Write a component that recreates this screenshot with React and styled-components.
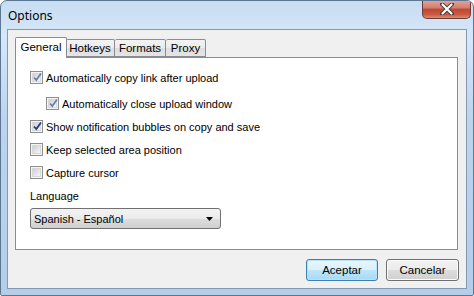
import React from 'react';
import styled, { createGlobalStyle } from 'styled-components';

const Global = createGlobalStyle`
  body {
    margin: 0;
    background: #ffffff;
  }
`;

const Window = styled.div`
  width: 474px;
  height: 296px;
  box-sizing: border-box;
  border: 1px solid #5d7792;
  border-radius: 7px 7px 2px 2px;
  background: linear-gradient(180deg, #c7ddf3 0%, #d6e7f8 12%, #bcd4ee 40%, #b4cde9 100%);
  display: flex;
  flex-direction: column;
  overflow: hidden;
  font-family: Tahoma, "Liberation Sans", sans-serif;
`;

const TitleBar = styled.div`
  height: 28px;
  display: flex;
  align-items: flex-start;
  justify-content: space-between;
  padding: 0 2px 0 7px;
`;

const Title = styled.span`
  font-family: "Noto Sans", "Open Sans", sans-serif;
  font-size: 12px;
  color: #000;
  margin-top: 6px;
`;

const CloseButton = styled.div`
  width: 49px;
  height: 19px;
  margin-top: -1px;
  box-sizing: border-box;
  border: 1px solid #6d3a36;
  border-top: none;
  border-radius: 0 0 5px 5px;
  background: linear-gradient(180deg, #e4a59b 0%, #d27d6f 45%, #bf4734 50%, #c9593f 80%, #dd8e6f 100%);
  display: flex;
  align-items: center;
  justify-content: center;
`;

const Client = styled.div`
  flex: 1;
  margin: 0 6px 6px 6px;
  box-sizing: border-box;
  border: 1px solid #8399b1;
  background: #f0f0f0;
  padding: 7px 7px 0 7px;
  display: flex;
  flex-direction: column;
`;

const TabStrip = styled.div`
  display: flex;
  align-items: flex-end;
  height: 20px;
  position: relative;
  z-index: 1;
`;

const Tab = styled.div`
  box-sizing: border-box;
  width: ${p => p.$w}px;
  height: ${p => (p.$active ? 21 : 18)}px;
  margin-bottom: ${p => (p.$active ? -1 : 0)}px;
  border: 1px solid #898c95;
  border-bottom: ${p => (p.$active ? 'none' : '1px solid #898c95')};
  border-left: ${p => (p.$first || p.$active ? '1px solid #898c95' : 'none')};
  border-radius: 2px 2px 0 0;
  background: ${p => (p.$active ? '#ffffff' : 'linear-gradient(180deg, #f3f3f3 0%, #ebebeb 50%, #dedede 51%, #e5e5e5 100%)')};
  font-size: 11.5px;
  color: #000;
  display: flex;
  justify-content: center;
  padding-top: ${p => (p.$active ? 3 : 2)}px;
  ${p => p.$active ? 'margin-right: -1px; position: relative; z-index: 2;' : ''}
`;

const Panel = styled.div`
  width: 443px;
  height: 193px;
  box-sizing: border-box;
  border: 1px solid #898c95;
  background: #ffffff;
  padding: 13px 0 0 14px;
  display: flex;
  flex-direction: column;
`;

const Row = styled.label`
  display: flex;
  align-items: center;
  height: 13px;
  margin-bottom: ${p => (p.$gap ? 13 : 10)}px;
  margin-left: ${p => (p.$indent ? 16 : 0)}px;
  font-size: 11px;
  color: #000;
  gap: 3px;
`;

const Box = styled.span`
  width: 13px;
  height: 13px;
  box-sizing: border-box;
  border: 1px solid #8e8f8f;
  background: #f4f4f4;
  display: flex;
  align-items: center;
  justify-content: center;
  flex-shrink: 0;
`;

const BoxInner = styled.span`
  width: 9px;
  height: 9px;
  box-sizing: border-box;
  border: 1px solid #d8d8d8;
  background: linear-gradient(135deg, #cbcfd5 0%, #f6f6f6 100%);
  display: flex;
  align-items: center;
  justify-content: center;
  position: relative;
`;

const Check = styled.svg`
  position: absolute;
  left: -1px;
  top: -2px;
`;

const FieldLabel = styled.div`
  font-size: 11px;
  color: #000;
  margin-top: 1px;
  margin-bottom: 6px;
`;

const Select = styled.div`
  width: 191px;
  height: 21px;
  box-sizing: border-box;
  border: 1px solid #707070;
  border-radius: 3px;
  background: linear-gradient(180deg, #f2f2f2 0%, #ebebeb 50%, #dddddd 51%, #cfcfcf 100%);
  display: flex;
  align-items: center;
  justify-content: space-between;
  padding: 0 7px 0 3px;
  font-size: 11px;
  color: #000;
`;

const Footer = styled.div`
  display: flex;
  justify-content: flex-end;
  gap: 8px;
  padding: 9px 0 0 0;
`;

const Button = styled.div`
  width: ${p => p.$w}px;
  height: 22px;
  box-sizing: border-box;
  border: 1px solid ${p => (p.$default ? '#3c7fb1' : '#707070')};
  border-radius: 3px;
  background: ${p => (p.$default
    ? 'linear-gradient(180deg, #eaf6fd 0%, #d9f0fc 50%, #bee6fd 51%, #a7d9f5 100%)'
    : 'linear-gradient(180deg, #f2f2f2 0%, #ebebeb 50%, #dddddd 51%, #cfcfcf 100%)')};
  box-shadow: inset 0 0 0 1px ${p => (p.$default ? '#b8e3f8' : '#fcfcfc')};
  font-size: 11.5px;
  color: #000;
  display: flex;
  align-items: center;
  justify-content: center;
`;

const CheckBox = ({ checked, dim }) => (
  <Box>
    <BoxInner>
      {checked && (
        <Check width="11" height="11" viewBox="0 0 11 11">
          <path d="M2 5.5 L4.3 8 L9 1.5" fill="none" stroke={dim ? '#6f7fa6' : '#23398a'} strokeWidth="1.8" />
        </Check>
      )}
    </BoxInner>
  </Box>
);

const options = [
  { text: 'Automatically copy link after upload', checked: true, dim: true, gap: true },
  { text: 'Automatically close upload window', checked: true, dim: true, indent: true },
  { text: 'Show notification bubbles on copy and save', checked: true },
  { text: 'Keep selected area position', checked: false },
  { text: 'Capture cursor', checked: false },
];

const tabs = [
  { name: 'General', w: 52, active: true },
  { name: 'Hotkeys', w: 49 },
  { name: 'Formats', w: 51 },
  { name: 'Proxy', w: 40 },
];

export default function App() {
  return (
    <>
      <Global />
      <Window>
        <TitleBar>
          <Title>Options</Title>
          <CloseButton>
            <svg width="14" height="12" viewBox="0 0 14 12">
              <path d="M2 1 L12 11 M12 1 L2 11" stroke="#3b3b3b" strokeWidth="4" strokeLinecap="round" />
              <path d="M2.5 1.5 L11.5 10.5 M11.5 1.5 L2.5 10.5" stroke="#ffffff" strokeWidth="2.2" strokeLinecap="round" />
            </svg>
          </CloseButton>
        </TitleBar>
        <Client>
          <TabStrip>
            {tabs.map((t, i) => (
              <Tab key={t.name} $w={t.w} $active={t.active} $first={i === 0}>{t.name}</Tab>
            ))}
          </TabStrip>
          <Panel>
            {options.map(o => (
              <Row key={o.text} $indent={o.indent} $gap={o.gap}>
                <CheckBox checked={o.checked} dim={o.dim} />
                {o.text}
              </Row>
            ))}
            <FieldLabel>Language</FieldLabel>
            <Select>
              <span>Spanish - Español</span>
              <svg width="7" height="4" viewBox="0 0 7 4">
                <path d="M0 0 H7 L3.5 4 Z" fill="#000" />
              </svg>
            </Select>
          </Panel>
          <Footer>
            <Button $default $w={72}>Aceptar</Button>
            <Button $w={73}>Cancelar</Button>
          </Footer>
        </Client>
      </Window>
    </>
  );
}
